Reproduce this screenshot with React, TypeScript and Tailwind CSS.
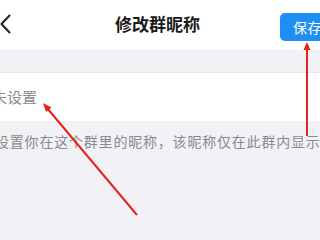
import React from "react";

export default function App() {
  return (
    <div className="relative w-[320px] h-[240px] overflow-hidden bg-[#f1f1f6] font-['Noto_Sans_CJK_SC','Noto_Sans',sans-serif]">
      <div className="h-[50px] bg-white flex items-center">
        <div className="w-[40px] h-full flex items-center">
          <svg width="12" height="22" viewBox="0 0 12 22" className="ml-0">
            <path d="M9.5 1.5 L1.5 10 L9.5 18.5" fill="none" stroke="#222" strokeWidth="2" strokeLinecap="round" strokeLinejoin="round" />
          </svg>
        </div>
        <div className="flex-1 text-center pr-[5px] text-[17px] leading-[22px] font-bold text-[#1a1a1a] mt-[-2px]">
          修改群昵称
        </div>
        <div className="w-[40px] h-full flex items-center">
          <div className="shrink-0 w-[56px] h-[28px] mt-[4px] bg-[#1e8ef2] rounded-[5px] pl-[13px] text-white text-[14px] leading-[28px] tracking-[0.5px]">
            保存
          </div>
        </div>
      </div>
      <div className="h-[22px]" />
      <div className="h-[49px] bg-white border-t border-[#e6e6ec] flex items-center">
        <span className="ml-[-8px] text-[15px] leading-[20px] text-[#8c8c8c]">未设置</span>
      </div>
      <div className="mt-[10px] whitespace-nowrap ml-[-5px] text-[14px] leading-[20px] tracking-[0.8px] text-[#8a8a8a]">
        设置你在这个群里的昵称，该昵称仅在此群内显示
      </div>
      <svg className="absolute inset-0 pointer-events-none" width="320" height="240" viewBox="0 0 320 240">
        <line x1="137" y1="215" x2="47" y2="108" stroke="#e3231c" strokeWidth="2" />
        <polygon points="43,103 51.5,107.6 46.1,112.1" fill="#e3231c" />
        <line x1="307" y1="48" x2="307" y2="136" stroke="#e3231c" strokeWidth="2" />
        <polygon points="307,42 310.5,50 303.5,50" fill="#e3231c" />
      </svg>
    </div>
  );
}
